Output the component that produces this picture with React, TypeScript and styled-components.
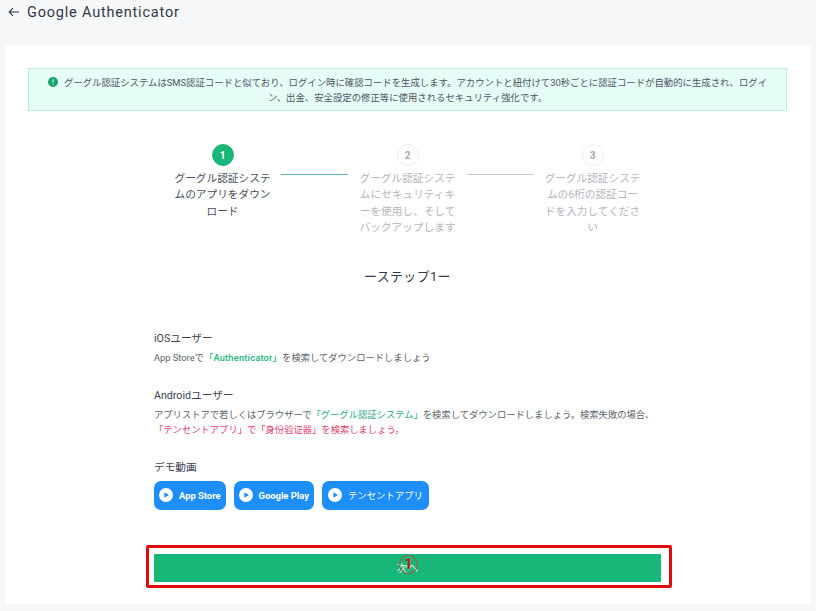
import React from "react";
import styled, { createGlobalStyle } from "styled-components";

const Global = createGlobalStyle`
  html, body { margin: 0; padding: 0; background: #f6f7f9; }
  body { font-family: "Roboto", "Noto Sans CJK JP", sans-serif; width: 816px; height: 611px; overflow: hidden; }
  * { box-sizing: border-box; }
`;
const Page = styled.div`display: flex; flex-direction: column; width: 816px; height: 611px;`;
const Header = styled.header`
  height: 45px; display: flex; align-items: flex-start; gap: 7px; padding: 3px 0 0 8px;
  color: #333846;
`;
const BackIcon = styled.svg`width: 12px; height: 12px; margin-top: 3px; flex: none;`;
const Title = styled.h1`margin: 0; font-size: 14.5px; line-height: 20px; font-weight: 400; letter-spacing: 0.8px;`;
const Card = styled.main`
  width: 806px; height: 559px; margin-left: 5px; background: #fff; padding: 23px 24px 0 23px;
  display: flex; flex-direction: column;
`;
const Alert = styled.div`
  height: 43px; background: #e5fcf7; border: 1px solid #bdeee0; padding: 6px 16px 0;
  font-size: 9.38px; line-height: 15px; color: #4f5563; text-align: center;
`;
const AlertIcon = styled.svg`width: 10px; height: 10px; vertical-align: -1px; margin-right: 6px;`;
const Stepper = styled.div`display: flex; justify-content: center; align-items: flex-start; margin-top: 33px;`;
const Step = styled.div`width: 96px; display: flex; flex-direction: column; align-items: center;`;
const Dot = styled.div<{ $active?: boolean }>`
  width: 22px; height: 22px; border-radius: 50%; display: flex; align-items: center; justify-content: center;
  font-size: 10px; font-weight: 700;
  background: ${p => (p.$active ? "#19b67a" : "#fff")};
  color: ${p => (p.$active ? "#fff" : "#a4a8b0")};
  border: 1px solid ${p => (p.$active ? "#19b67a" : "#eef0f2")};
`;
const StepText = styled.div<{ $active?: boolean }>`
  margin-top: 5px; font-size: 10.67px; line-height: 16.4px; text-align: center;
  color: ${p => (p.$active ? "#494e5b" : "#b3b6bd")};
`;
const Connector = styled.div<{ $done?: boolean }>`
  width: 67px; height: 1px; flex: none;
  margin: 30px ${p => (p.$done ? "11.5px 0 10.5px" : "11px 0 11px")};
  background: ${p => (p.$done ? "#5cb3b0" : "#c9ccd2")};
`;
const StepHeading = styled.h2`
  margin: 30px 0 0; text-align: center; font-size: 13px; line-height: 20px; font-weight: 400; color: #333846;
  letter-spacing: 0.3px;
`;
const Body = styled.section`display: flex; flex-direction: column; margin-top: 44px; padding-left: 126px; padding-right: 126px;`;
const Label = styled.div`font-size: 10.67px; line-height: 16px; color: #3d4250;`;
const Para = styled.p`margin: 3.5px 0 0; font-size: 9.3px; line-height: 15px; color: #5a5f6c;`;
const Block = styled.div`margin-bottom: 19px; &:first-child{ margin-bottom: 22.5px; } &:nth-child(2){ margin-bottom: 22.5px; }`;
const Green = styled.span`color: #19b67a; font-weight: 500; letter-spacing: 0.2px;`;
const Teal = styled.span`color: #2aa88c;`;
const Pink = styled.span`display: block; color: #e0406f;`;
const Buttons = styled.div`display: flex; gap: 8px; margin-top: 5px;`;
const Demo = styled.button`
  height: 29px; border: 0; border-radius: 7px; background: #1e8ffa; color: #fff;
  display: flex; align-items: center; gap: 6px; padding: 0 5px;
  font-family: inherit; font-size: 9.4px; font-weight: 700;
`;
const DemoWide = styled(Demo)`font-weight: 400; padding: 0 6px;`;
const Play = styled.svg`width: 14px; height: 14px; flex: none;`;
const NextWrap = styled.div`margin-top: 25px; padding-left: 126px; padding-right: 126px;`;
const Next = styled.button`
  position: relative; display: flex; align-items: center; justify-content: center; width: 507px; height: 28px;
  border: 0; border-radius: 1px; background: #19b67a; color: #dff5ea; font-family: inherit; font-size: 10.67px;
`;
const Frame = styled.div`
  position: absolute; left: -8px; right: -11px; top: -9px; bottom: -6px;
  border: 3px solid #e00b0b; border-radius: 2px;
`;
const Marker = styled.div`
  position: absolute; left: 245px; top: 1px; width: 19px; height: 19px; border-radius: 50%;
  border: 1px solid #a3563f; color: #d81818; font-size: 14px; font-weight: 700; line-height: 17px; text-align: center;
`;

const PlayIcon = () => (
  <Play viewBox="0 0 14 14"><circle cx="7" cy="7" r="7" fill="#fff" /><path d="M5.4 4.2 10 7l-4.6 2.8z" fill="#1e8ffa" /></Play>
);

export default function App() {
  return (
    <Page>
      <Global />
      <Header>
        <BackIcon viewBox="0 0 12 12" fill="none" stroke="#2b3040" strokeWidth="1.1">
          <path d="M11 6H1.2M5 2.2 1.2 6 5 9.8" />
        </BackIcon>
        <Title>Google Authenticator</Title>
      </Header>
      <Card>
        <Alert>
          <AlertIcon viewBox="0 0 10 10"><circle cx="5" cy="5" r="5" fill="#14a46c" /><path d="M5 2.2v3.4M5 6.8v1" stroke="#e5fcf7" strokeWidth="1.1" /></AlertIcon>
          グーグル認証システムはSMS認証コードと似ており、ログイン時に確認コードを生成します。アカウントと紐付けて30秒ごとに認証コードが自動的に生成され、ログイン、出金、安全設定の修正等に使用されるセキュリティ強化です。
        </Alert>
        <Stepper>
          <Step>
            <Dot $active>1</Dot>
            <StepText $active>グーグル認証システムのアプリをダウンロード</StepText>
          </Step>
          <Connector $done />
          <Step>
            <Dot>2</Dot>
            <StepText>グーグル認証システムにセキュリティキーを使用し、そしてバックアップします</StepText>
          </Step>
          <Connector />
          <Step>
            <Dot>3</Dot>
            <StepText>グーグル認証システムの6桁の認証コードを入力してください</StepText>
          </Step>
        </Stepper>
        <StepHeading>ーステップ1ー</StepHeading>
        <Body>
          <Block>
            <Label>iOSユーザー</Label>
            <Para>App Storeで<Green>「Authenticator」</Green>を検索してダウンロードしましょう</Para>
          </Block>
          <Block>
            <Label>Androidユーザー</Label>
            <Para>
              アプリストアで若しくはブラウザーで<Teal>「グーグル認証システム」</Teal>を検索してダウンロードしましょう。検索失敗の場合、
              <Pink>「テンセントアプリ」で「身份验证器」を検索しましょう。</Pink>
            </Para>
          </Block>
          <Block>
            <Label>デモ動画</Label>
            <Buttons>
              <Demo><PlayIcon />App Store</Demo>
              <Demo><PlayIcon />Google Play</Demo>
              <DemoWide><PlayIcon />テンセントアプリ</DemoWide>
            </Buttons>
          </Block>
        </Body>
        <NextWrap>
          <Next>
            次へ
            <Marker>1</Marker>
            <Frame />
          </Next>
        </NextWrap>
      </Card>
    </Page>
  );
}
